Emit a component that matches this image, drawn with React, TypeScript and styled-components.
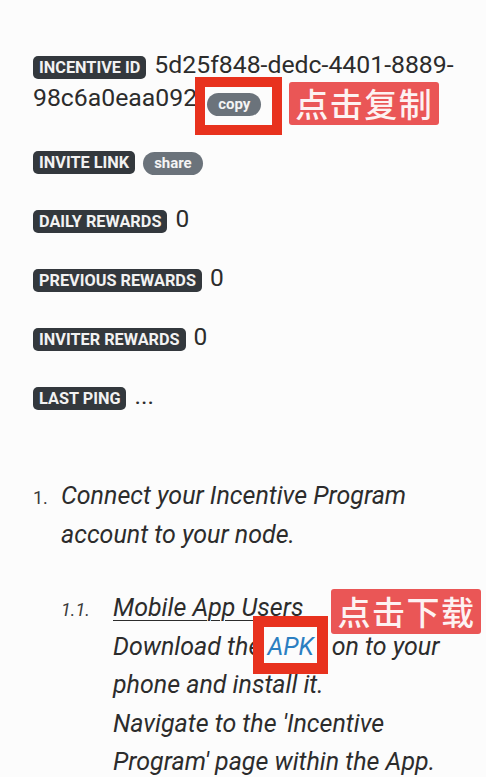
import styled, { createGlobalStyle } from 'styled-components';

const GlobalStyle = createGlobalStyle`
  html, body {
    margin: 0;
    padding: 0;
    background: #fcfcfc;
  }
  body {
    font-family: Roboto, "Noto Sans CJK SC", sans-serif;
    color: #2c2c2c;
  }
`;

const fields = [
  { label: 'DAILY REWARDS', value: '0' },
  { label: 'PREVIOUS REWARDS', value: '0' },
  { label: 'INVITER REWARDS', value: '0' },
  { label: 'LAST PING', value: '...' },
];

export default function App() {
  return (
    <Page>
      <GlobalStyle />
      <Fields>
        <IdField>
          <Badge>INCENTIVE ID</Badge>5d25f848-dedc-4401-8889-98c6a0eaa092
          <CopyMark>
            <Pill>copy</Pill>
            <CopyFrame />
            <CopyCallout>点击复制</CopyCallout>
          </CopyMark>
        </IdField>
        <Field>
          <Badge>INVITE LINK</Badge>
          <Pill>share</Pill>
        </Field>
        {fields.map((f) => (
          <Field key={f.label}>
            <Badge>{f.label}</Badge>
            {f.value}
          </Field>
        ))}
      </Fields>

      <Steps>
        <Step>
          <Num>1.</Num>
          <StepBody>
            Connect your Incentive Program account to your node.
            <SubStep>
              <Num $sub>1.1.</Num>
              <StepBody>
                <Underlined>Mobile App Users</Underlined>
                <br />
                Download the{' '}
                <ApkMark>
                  <ApkLink>APK</ApkLink>
                  <ApkFrame />
                  <ApkCallout>点击下载</ApkCallout>
                </ApkMark>
                on to your phone and install it.
                <br />
                Navigate to the 'Incentive Program' page within the App.
              </StepBody>
            </SubStep>
          </StepBody>
        </Step>
      </Steps>
    </Page>
  );
}

const Page = styled.div`
  padding: 48px 30px 0 33px;
  height: 777px;
  box-sizing: border-box;
  overflow: hidden;
`;

const Fields = styled.div`
  display: flex;
  flex-direction: column;
  gap: 27px;
`;

const Field = styled.div`
  font-size: 24.5px;
  line-height: 32px;
`;

const IdField = styled(Field)`
  font-size: 24.8px;
  line-height: 33px;
  margin-bottom: 1px;
`;

const Badge = styled.span`
  display: inline-block;
  margin-right: 8px;
  padding: 0 6px;
  height: 23px;
  line-height: 23px;
  border-radius: 5px;
  background: #33383d;
  color: #f2f2f2;
  font-size: 16.3px;
  font-weight: 700;
`;

const Pill = styled.span`
  display: inline-block;
  padding: 0 11px;
  height: 23px;
  line-height: 23px;
  border-radius: 12px;
  background: #6b737b;
  color: #f4f4f4;
  font-size: 15px;
  font-weight: 700;
`;

const Mark = styled.span`
  position: relative;
  display: inline-flex;
`;

const CopyMark = styled(Mark)`
  margin-left: 10px;
  vertical-align: -3px;
`;

const ApkMark = styled(Mark)``;

const Frame = styled.span`
  position: absolute;
  box-sizing: border-box;
  border: 10px solid #e8321e;
`;

const CopyFrame = styled(Frame)`
  left: -12px;
  top: -16px;
  width: 87px;
  height: 58px;
`;

const ApkFrame = styled(Frame)`
  left: -14px;
  top: -12px;
  width: 75px;
  height: 58px;
  border-width: 11px;
`;

const Callout = styled.span`
  position: absolute;
  padding: 0 6px;
  border-radius: 3px;
  background: #ea5656;
  color: #fdf2f2;
  font-family: "Noto Sans CJK SC", sans-serif;
  font-style: normal;
  font-weight: 500;
  font-size: 33px;
  letter-spacing: 1.5px;
  white-space: nowrap;
`;

const CopyCallout = styled(Callout)`
  left: 82px;
  top: -11px;
  height: 43px;
  line-height: 43px;
`;

const ApkCallout = styled(Callout)`
  left: 64px;
  top: -39px;
  height: 45px;
  line-height: 45px;
`;

const Steps = styled.ol`
  list-style: none;
  margin: 65px 0 0;
  padding: 0;
`;

const Step = styled.li`
  display: flex;
`;

const Num = styled.span<{ $sub?: boolean }>`
  flex: none;
  width: ${(p) => (p.$sub ? '52px' : '28px')};
  font-size: 18px;
  line-height: 38px;
  color: #3a3a3a;
  padding-top: 2px;
  font-style: ${(p) => (p.$sub ? 'italic' : 'normal')};
`;

const StepBody = styled.div`
  font-size: 25px;
  line-height: 38.5px;
  font-style: italic;
`;

const SubStep = styled.div`
  display: flex;
  margin-top: 35px;
`;

const Underlined = styled.span`
  text-decoration: underline;
  text-underline-offset: 4px;
  text-decoration-thickness: 1px;
`;

const ApkLink = styled.a`
  padding-right: 18px;
  color: #2b7fc2;
  text-decoration: none;
  cursor: pointer;
`;
